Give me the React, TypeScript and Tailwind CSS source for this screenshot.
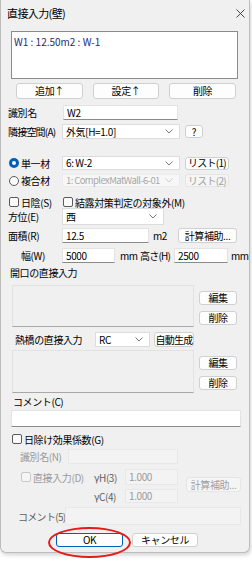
import React from "react"

const font = { fontFamily: '"Noto Sans CJK JP", "Noto Sans", sans-serif' }

function Btn({ w, h = 14, children, disabled, primary, className = "" }: { w: number; h?: number; children: React.ReactNode; disabled?: boolean; primary?: boolean; className?: string }) {
  const base = "flex shrink-0 items-center justify-center rounded-[3px] border leading-none"
  const look = disabled
    ? "border-[#e5e5e5] bg-[#f5f5f5] text-[#a0a0a0]"
    : primary
      ? "border-[#005fb8] bg-[#fdfdfd] text-black"
      : "border-[#d0d0d0] bg-[#fdfdfd] text-black"
  return (
    <div className={`${base} ${look} ${className}`} style={{ width: w, height: h }}>
      {children}
    </div>
  )
}

function Field({ w, h = 15, value = "", disabled, className = "" }: { w: number; h?: number; value?: string; disabled?: boolean; className?: string }) {
  return (
    <div
      className={`flex shrink-0 items-center border px-[3px] leading-none ${disabled ? "border-[#e8e8e8] bg-[#f3f3f3] text-[#9a9a9a]" : "border-[#e3e3e3] border-b-[#8a8a8a] bg-white text-black"} ${className}`}
      style={{ width: w, height: h }}
    >
      {value}
    </div>
  )
}

function Chevron({ color = "#6a6a6a" }: { color?: string }) {
  return (
    <svg width="8" height="5" viewBox="0 0 8 5" className="shrink-0">
      <path d="M0.5 0.5 L4 4 L7.5 0.5" fill="none" stroke={color} strokeWidth="0.9" />
    </svg>
  )
}

function Select({ w, h = 15, value, disabled, className = "" }: { w: number; h?: number; value: string; disabled?: boolean; className?: string }) {
  return (
    <div
      className={`flex shrink-0 items-center justify-between border pl-[3px] pr-[6px] leading-none ${disabled ? "border-[#ebebeb] bg-[#f7f7f7] text-[#a8a8a8]" : "border-[#dcdcdc] bg-white text-black"} ${className}`}
      style={{ width: w, height: h }}
    >
      <span>{value}</span>
      <Chevron color={disabled ? "#c8c8c8" : "#6a6a6a"} />
    </div>
  )
}

function Check({ disabled, className = "" }: { disabled?: boolean; className?: string }) {
  return (
    <div
      className={`h-[10px] w-[10px] shrink-0 rounded-[2px] border ${disabled ? "border-[#c8c8c8] bg-[#f5f5f5]" : "border-[#5a5a5a] bg-[#fbfbfb]"} ${className}`}
    />
  )
}

function Radio({ checked }: { checked?: boolean }) {
  return checked ? (
    <div className="flex h-[10px] w-[10px] shrink-0 items-center justify-center rounded-full bg-[#005fb8]">
      <div className="h-[4px] w-[4px] rounded-full bg-white" />
    </div>
  ) : (
    <div className="h-[10px] w-[10px] shrink-0 rounded-full border border-[#5a5a5a] bg-[#fbfbfb]" />
  )
}

function ListPanel() {
  return (
    <div className="flex h-full">
      <div className="ml-[11px] h-full w-[182px] border border-[#e2e2e2] border-b-[#a8a8a8] bg-[#f0f0f0]" />
      <div className="ml-[5px] flex flex-col pt-[6px]">
        <Btn w={38}>編集</Btn>
        <Btn w={38} className="mt-[6px]">削除</Btn>
      </div>
    </div>
  )
}

export default function App() {
  return (
    <div className="h-[562px] w-[252px] whitespace-nowrap bg-white text-[10px] tracking-[-0.4px] text-black" style={font}>
      <div className="relative h-[553px] w-[250px] rounded-b-[6px] border border-t-0 border-[#bdbdbd] bg-[#f0f0f0] shadow-[1px_2px_4px_rgba(0,0,0,0.18)]">
        {/* title bar */}
        <div className="flex h-[29px] items-center justify-between pl-[6px] pr-[4px] pb-[2px]">
          <span className="text-[11px] tracking-[-0.6px]">直接入力(壁)</span>
          <svg width="9" height="9" viewBox="0 0 9 9">
            <path d="M0.5 0.5 L8.5 8.5 M8.5 0.5 L0.5 8.5" stroke="#333" strokeWidth="0.9" />
          </svg>
        </div>

        {/* list */}
        <div className="ml-[10px] mt-[2px] h-[48px] w-[227px] border border-[#8c8c8c] bg-white px-[2px] pt-[2px] tracking-normal text-[#2a2a7a]">
          W1 : 12.50m2 : W-1
        </div>

        <div className="mt-[4px] flex h-[16px]">
          <Btn w={67} h={16} className="ml-[15px]">追加↑</Btn>
          <Btn w={66} h={16} className="ml-[10px]">設定↑</Btn>
          <Btn w={67} h={16} className="ml-[10px]">削除</Btn>
        </div>

        <div className="mt-[6px] flex h-[15px] items-center">
          <span className="ml-[7px] w-[55px] shrink-0">識別名</span>
          <Field w={115} value="W2" />
        </div>

        <div className="mt-[4px] flex h-[15px] items-center">
          <span className="ml-[7px] w-[54px] shrink-0 tracking-[-0.8px]">隣接空間(A)</span>
          <Select w={118} value="外気[H=1.0]" />
          <Btn w={18} h={13} className="ml-[5px]">?</Btn>
        </div>

        <div className="mt-[17px] flex h-[14px] items-center">
          <div className="ml-[8px] flex w-[53px] shrink-0 items-center gap-[2px]">
            <Radio checked />
            <span>単一材</span>
          </div>
          <Select w={118} h={14} value="6: W-2" />
          <Btn w={44} h={13} className="ml-[5px] tracking-[-0.7px]">リスト(1)</Btn>
        </div>

        <div className="mt-[4px] flex h-[13px] items-center">
          <div className="ml-[8px] flex w-[53px] shrink-0 items-center gap-[2px]">
            <Radio />
            <span>複合材</span>
          </div>
          <Select w={118} h={13} value="1: ComplexMatWall-6-01" disabled className="text-[9.5px] tracking-[-0.6px]" />
          <Btn w={44} h={13} className="ml-[5px] tracking-[-0.7px]" disabled>リスト(2)</Btn>
        </div>

        <div className="mt-[9px] flex h-[12px] items-center">
          <div className="ml-[8px] flex w-[54px] shrink-0 items-center gap-[2px]">
            <Check />
            <span>日陰(S)</span>
          </div>
          <Check />
          <span className="ml-[2px]">結露対策判定の対象外(M)</span>
        </div>

        <div className="flex h-[17px] items-center">
          <span className="ml-[7px] w-[54px] shrink-0">方位(E)</span>
          <Select w={102} h={17} value="西" />
        </div>

        <div className="mt-[3px] flex h-[15px] items-center">
          <span className="ml-[7px] w-[54px] shrink-0">面積(R)</span>
          <Field w={87} value="12.5" />
          <span className="ml-[4px] w-[25px] shrink-0">m2</span>
          <Btn w={59} h={15}>計算補助...</Btn>
        </div>

        <div className="mt-[5px] flex h-[15px] items-center">
          <span className="ml-[20px] w-[41px] shrink-0">幅(W)</span>
          <Field w={53} value="5000" />
          <span className="ml-[5px] w-[20px] shrink-0">mm</span>
          <span className="w-[34px] shrink-0 tracking-[-0.8px]">高さ(H)</span>
          <Field w={54} value="2500" />
          <span className="ml-[3px]">mm</span>
        </div>

        <div className="mt-[2px] flex h-[14px] items-center">
          <span className="ml-[9px]">開口の直接入力</span>
        </div>

        <div className="mt-[6px] h-[42px]">
          <ListPanel />
        </div>

        <div className="mt-[5px] flex h-[15px] items-center">
          <span className="ml-[14px] w-[80px] shrink-0">熱橋の直接入力</span>
          <Select w={55} value="RC" />
          <Btn w={40} h={15} className="ml-[4px] tracking-[-0.8px]">自動生成</Btn>
        </div>

        <div className="mt-[3px] h-[43px]">
          <ListPanel />
        </div>

        <div className="mt-[1px] flex h-[14px] items-center">
          <span className="ml-[12px]">コメント(C)</span>
        </div>
        <Field w={230} h={17} className="ml-[10px] mt-[2px]" />

        <div className="mt-[6px] flex h-[12px] items-center">
          <Check className="ml-[11px]" />
          <span className="ml-[2px]">日除け効果係数(G)</span>
        </div>

        <div className="mt-[4px] flex h-[15px] items-center text-[#9a9a9a]">
          <span className="ml-[19px] w-[48px] shrink-0">識別名(N)</span>
          <Field w={110} disabled />
        </div>

        <div className="mt-[5px] flex h-[34px] text-[#9a9a9a]">
          <div className="flex flex-col">
            <div className="flex h-[16px] items-center">
              <Check disabled className="ml-[20px]" />
              <span className="ml-[2px] w-[61px] shrink-0">直接入力(D)</span>
              <span className="w-[31px] shrink-0 text-[#606060]">γH(3)</span>
              <Field w={53} h={16} value="1.000" disabled />
            </div>
            <div className="mt-[4px] flex h-[14px] items-center">
              <span className="ml-[93px] w-[31px] shrink-0 text-[#606060]">γC(4)</span>
              <Field w={53} h={14} value="1.000" disabled />
            </div>
          </div>
          <Btn w={55} h={15} className="ml-[8px] mt-[8px]" disabled>計算補助...</Btn>
        </div>

        <div className="mt-[4px] flex h-[18px] items-center">
          <span className="ml-[17px] w-[47px] shrink-0 tracking-[-0.7px] text-[#606060]">コメント(5)</span>
          <Field w={176} h={18} disabled />
        </div>

        <div className="mt-[8px] flex h-[14px]">
          <Btn w={67} h={14} primary className="ml-[55px]">OK</Btn>
          <Btn w={66} h={14} className="ml-[9px]">キャンセル</Btn>
        </div>

        {/* highlight drawn over the OK button */}
        <div className="pointer-events-none absolute left-[47px] top-[527px] h-[31px] w-[83px] rounded-[50%] border-2 border-[#e51a1a]" />
      </div>
    </div>
  )
}
